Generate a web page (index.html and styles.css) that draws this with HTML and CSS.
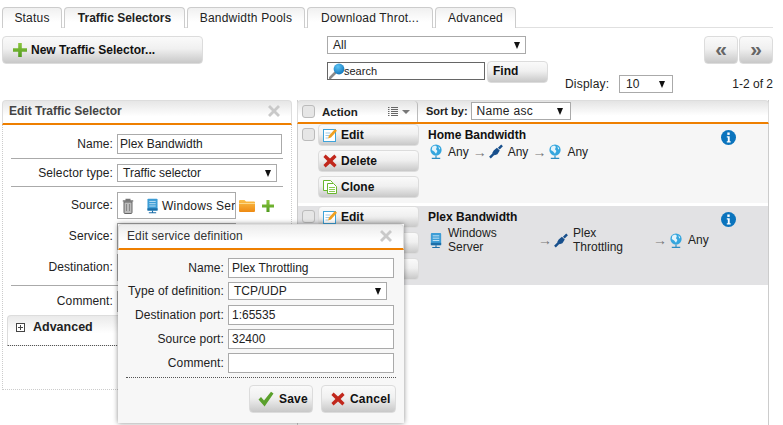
FILE: index.html
```html
<!DOCTYPE html>
<html lang="en">
<head>
<meta charset="utf-8">
<title>Traffic Selectors</title>
<link rel="stylesheet" href="styles.css">
</head>
<body>
<svg class="defs" width="0" height="0" aria-hidden="true">
  <defs>
    <linearGradient id="gGreen" x1="0" y1="0" x2="0" y2="1"><stop offset="0" stop-color="#8cc63f"/><stop offset="1" stop-color="#4f9a1e"/></linearGradient>
    <linearGradient id="gFolder" x1="0" y1="0" x2="0" y2="1"><stop offset="0" stop-color="#fbc04a"/><stop offset="1" stop-color="#ee8a12"/></linearGradient>
    <radialGradient id="gLens" cx=".4" cy=".3" r=".8"><stop offset="0" stop-color="#5cc4f5"/><stop offset="1" stop-color="#0a6db5"/></radialGradient>
    <symbol id="i-plus" viewBox="0 0 14 14"><path d="M5.2 0h3.6v5.2H14v3.6H8.8V14H5.2V8.8H0V5.2h5.2z" fill="url(#gGreen)"/></symbol>
    <symbol id="i-close" viewBox="0 0 12 12"><path d="M2 0l4 4 4-4 2 2-4 4 4 4-2 2-4-4-4 4-2-2 4-4-4-4z" fill="#c9c9c9"/></symbol>
    <symbol id="i-x" viewBox="0 0 14 14"><path d="M2.6.6L7 4.6 11.4.6 13.6 3 9.6 7l4 4-2.2 2.4L7 9.4l-4.4 4L.4 11l4-4-4-4z" fill="#c1271c"/></symbol>
    <symbol id="i-check" viewBox="0 0 16 16"><path d="M.5 8.5L3 6l3 3.6L13 .8l2.5 1.6L6.6 15.5z" fill="#5aa02c"/></symbol>
    <symbol id="i-lens" viewBox="0 0 16 16"><path d="M1 15l5-5" stroke="#8b8b8b" stroke-width="2.6" stroke-linecap="round"/><circle cx="10" cy="6" r="5.4" fill="url(#gLens)"/></symbol>
    <symbol id="i-trash" viewBox="0 0 12 16"><path d="M3.5 1.5h5M.8 3h10.4" stroke="#777" stroke-width="1.4" fill="none"/><path d="M2 4h8v10.5a1 1 0 0 1-1 1H3a1 1 0 0 1-1-1z" fill="#bbb" stroke="#666"/><path d="M4.5 6v7M7.5 6v7" stroke="#888"/></symbol>
    <symbol id="i-server" viewBox="1 0 12 16"><rect x="1.5" y="0" width="11" height="13" rx="1" fill="#3d9dd6"/><path d="M3.5 3h7M3.5 5.5h7M3.5 8h7" stroke="#c9e6f6" stroke-width="1"/><rect x="1.5" y="10.5" width="11" height="2.5" fill="#1c6ea8"/><path d="M7 13v2M3 15.4h8" stroke="#1c6ea8" stroke-width="1.2"/></symbol>
    <symbol id="i-globe" viewBox="0 0 14 16"><circle cx="7" cy="6.5" r="6" fill="#35a6de"/><path d="M3 3l3-1.5 2 1.5-1 2.5 1.5 2-1.5 3L5 8 2.5 6.5zM9.5 2.5l2 2-1 1.5z" fill="#e4f4fb"/><path d="M7 12.5V15M2.500 15.3h9" stroke="#2a8cc2" stroke-width="1.2"/></symbol>
    <symbol id="i-link" viewBox="0 0 15 15"><path d="M5 6.5L8.5 3.5 11.5 6.5 9 10.5 6 11.5 3.5 9z" fill="#174f8c"/><path d="M1 14l4-4M10.5 4.5L14 1" stroke="#174f8c" stroke-width="2.6"/></symbol>
    <symbol id="i-info" viewBox="0 0 15 15"><circle cx="7.5" cy="7.5" r="7.5" fill="#0b74bd"/><rect x="6.3" y="2.5" width="2.4" height="2.4" fill="#fff"/><path d="M5.8 6.3h2.9v5h1v1.1H5.8v-1.1h1V7.4h-1z" fill="#fff"/></symbol>
    <symbol id="i-edit" viewBox="0 0 14 14"><rect x=".5" y="1.5" width="12" height="12" fill="#fff" stroke="#3fa3d9"/><path d="M2.5 5h5M2.5 7.5H6M2.5 10H5" stroke="#9cc9e6"/><path d="M5 10.500l1-3L12 1l2 1.800L8 9.500z" fill="#f0a020"/></symbol>
    <symbol id="i-clone" viewBox="0 0 14 14"><path d="M.5.500h7l2 2v8h-9z" fill="#fff" stroke="#6ab72f"/><path d="M4.500 3.500h6l3 3v7h-9z" fill="#fff" stroke="#6ab72f"/><path d="M6 7.500h6M6 9.500h6M6 11.500h6" stroke="#8ccb55"/></symbol>
    <symbol id="i-folder" viewBox="0 0 16 13"><path d="M0 2a1 1 0 0 1 1-1h4.500l1.500 1.500h8a1 1 0 0 1 1 1V12a1 1 0 0 1-1 1H1a1 1 0 0 1-1-1z" fill="url(#gFolder)"/><path d="M0 4.500h16" stroke="#fcd98a"/></symbol>
    <symbol id="i-list" viewBox="0 0 10 9"><path d="M0 .500h1.500M3 .500h7M0 2.500h1.500M3 2.500h7M0 4.500h1.500M3 4.500h7M0 6.500h1.500M3 6.500h7M0 8.500h1.500M3 8.500h7" stroke="#666"/></symbol>
  </defs>
</svg>

<nav class="tabs">
  <a class="tab tab-status">Status</a>
  <a class="tab tab-traffic active">Traffic Selectors</a>
  <a class="tab tab-pools">Bandwidth Pools</a>
  <a class="tab tab-download">Download Throt...</a>
  <a class="tab tab-advanced">Advanced</a>
</nav>

<section class="toolbar">
  <button class="btn btn-new"><svg class="ico14"><use href="#i-plus"/></svg>New Traffic Selector...</button>
  <div class="filters">
    <div class="select select-all"><span>All</span><i class="caret"></i></div>
    <div class="search-row">
      <div class="search"><svg class="ico-lens"><use href="#i-lens"/></svg><span>search</span></div>
      <button class="btn btn-find">Find</button>
    </div>
  </div>
  <div class="pager">
    <div class="pager-arrows">
      <button class="btn btn-arrow">«</button>
      <button class="btn btn-arrow">»</button>
    </div>
    <div class="pager-info">
      <span class="display-label">Display:</span>
      <div class="select select-display"><span>10</span><i class="caret"></i></div>
      <span class="count">1-2 of 2</span>
    </div>
  </div>
</section>

<main class="panels">
  <section class="panel-edit">
    <header class="panel-head">
      <h2>Edit Traffic Selector</h2>
      <svg class="ico-close"><use href="#i-close"/></svg>
    </header>
    <div class="edit-body">
      <div class="frow lined">
        <label>Name:</label>
        <input class="field field-name" value="Plex Bandwidth">
      </div>
      <div class="frow lined">
        <label>Selector type:</label>
        <div class="select select-type"><span>Traffic selector</span><i class="caret"></i></div>
      </div>
      <div class="frow">
        <label class="label-up">Source:</label>
        <div class="picker">
          <svg class="ico-trash"><use href="#i-trash"/></svg>
          <svg class="ico-server"><use href="#i-server"/></svg>
          <span class="picker-text">Windows Server</span>
        </div>
        <svg class="ico-folder"><use href="#i-folder"/></svg>
        <svg class="ico-add"><use href="#i-plus"/></svg>
      </div>
      <div class="frow">
        <label class="label-up">Service:</label>
        <div class="picker"></div>
      </div>
      <div class="frow lined">
        <label class="label-up">Destination:</label>
        <div class="picker"></div>
      </div>
      <div class="frow comment">
        <label class="label-up">Comment:</label>
        <input class="field field-name">
      </div>
      <div class="adv">
        <span class="adv-box"></span>
        <strong>Advanced</strong>
      </div>
    </div>
  </section>

  <section class="panel-list">
    <header class="list-head">
      <div class="col-action">
        <span class="check"></span>
        <strong>Action</strong>
        <svg class="ico-list"><use href="#i-list"/></svg>
        <i class="caret caret-grey"></i>
      </div>
      <div class="col-sort">
        <strong>Sort by:</strong>
        <div class="select select-sort"><span>Name asc</span><i class="caret"></i></div>
      </div>
    </header>

    <article class="row row-light">
      <div class="col-action">
        <span class="check"></span>
        <div class="actions">
          <button class="btn btn-act"><svg class="ico14"><use href="#i-edit"/></svg>Edit</button>
          <button class="btn btn-act"><svg class="ico14"><use href="#i-x"/></svg>Delete</button>
          <button class="btn btn-act"><svg class="ico14"><use href="#i-clone"/></svg>Clone</button>
        </div>
      </div>
      <div class="row-main">
        <div class="row-text">
          <h3>Home Bandwidth</h3>
          <div class="route">
            <svg class="ico-node"><use href="#i-globe"/></svg><span class="node">Any</span><span class="arrow">→</span>
            <svg class="ico-node"><use href="#i-link"/></svg><span class="node">Any</span><span class="arrow">→</span>
            <svg class="ico-node"><use href="#i-globe"/></svg><span class="node">Any</span>
          </div>
        </div>
        <svg class="ico-info"><use href="#i-info"/></svg>
      </div>
    </article>

    <article class="row row-dark">
      <div class="col-action">
        <span class="check"></span>
        <div class="actions">
          <button class="btn btn-act"><svg class="ico14"><use href="#i-edit"/></svg>Edit</button>
          <button class="btn btn-act"><svg class="ico14"><use href="#i-x"/></svg>Delete</button>
          <button class="btn btn-act"><svg class="ico14"><use href="#i-clone"/></svg>Clone</button>
        </div>
      </div>
      <div class="row-main">
        <div class="row-text">
          <h3>Plex Bandwidth</h3>
          <div class="route">
            <svg class="ico-node"><use href="#i-server"/></svg><span class="node node-server">Windows Server</span><span class="arrow">→</span>
            <svg class="ico-node"><use href="#i-link"/></svg><span class="node node-plex">Plex Throttling</span><span class="arrow">→</span>
            <svg class="ico-node"><use href="#i-globe"/></svg><span class="node">Any</span>
          </div>
        </div>
        <svg class="ico-info"><use href="#i-info"/></svg>
      </div>
    </article>
  </section>
</main>

<aside class="modal">
  <header class="modal-head">
    <h2>Edit service definition</h2>
    <svg class="ico-close"><use href="#i-close"/></svg>
  </header>
  <div class="modal-body">
    <div class="mrow"><label>Name:</label><input class="field" value="Plex Throttling"></div>
    <div class="mrow mrow-select"><label>Type of definition:</label><div class="select select-def"><span>TCP/UDP</span><i class="caret"></i></div></div>
    <div class="mrow"><label>Destination port:</label><input class="field" value="1:65535"></div>
    <div class="mrow"><label>Source port:</label><input class="field" value="32400"></div>
    <div class="mrow"><label>Comment:</label><input class="field"></div>
  </div>
  <footer class="modal-foot">
    <button class="btn btn-save"><svg class="ico-check"><use href="#i-check"/></svg>Save</button>
    <button class="btn btn-cancel"><svg class="ico14"><use href="#i-x"/></svg>Cancel</button>
  </footer>
</aside>
</body>
</html>
```

FILE: styles.css
```css
* { box-sizing: border-box; }
html, body { height: 425px; overflow: hidden; }
body {
  margin: 0;
  position: relative;
  background: #fff;
  color: #222;
  font: 12px/14px "Liberation Sans", Arial, sans-serif;
}
h2, h3 { margin: 0; font-size: 12px; }
.defs { position: absolute; }
button { font-family: inherit; color: #111; cursor: default; }

/* tabs */
.tabs {
  display: flex;
  gap: 2px;
  width: 771px;
  height: 21px;
  margin: 7px 0 0 2px;
  border-bottom: 1px solid #e0e0e0;
}
.tab {
  height: 21px;
  padding-top: 3px;
  text-align: center;
  letter-spacing: .2px;
  background: linear-gradient(#f0f0f0, #fff 70%);
  border: 1px solid #ccc;
  border-bottom: 0;
  border-radius: 4px 4px 0 0;
}
.tab.active { font-weight: bold; letter-spacing: 0; background: linear-gradient(#eee, #fff 70%); }
.tab-status { width: 60px; }
.tab-traffic { width: 121px; }
.tab-pools { width: 118px; }
.tab-download { width: 126px; }
.tab-advanced { width: 81px; }

/* buttons */
.btn {
  display: flex;
  align-items: center;
  padding: 0;
  border: 1px solid #dcdcdc;
  border-radius: 4px;
  background: linear-gradient(#fafafa 0, #f0f0f0 45%, #c8c8c8 100%);
  font-size: 12px;
  font-weight: bold;
}

/* toolbar */
.toolbar { display: flex; height: 64px; margin: 8px 0 0 2px; }
.btn-new { width: 201px; height: 28px; padding-left: 10px; gap: 4px; }
.ico14 { width: 14px; height: 14px; flex: none; }
.filters { width: 221px; margin-left: 124px; }
.select {
  display: flex;
  align-items: center;
  justify-content: space-between;
  height: 18px;
  padding: 0 5px;
  background: #fff;
  border: 1px solid #aaa;
}
.caret {
  width: 0;
  height: 0;
  border: 3.5px solid transparent;
  border-top: 7px solid #111;
  border-bottom: 0;
}
.caret-grey { border-top: 4px solid #777; border-left-width: 4px; border-right-width: 4px; }
.select-all { width: 199px; }
.search-row { display: flex; align-items: flex-start; gap: 2px; margin-top: 7px; }
.search {
  display: flex;
  align-items: center;
  width: 158px;
  height: 18px;
  margin-top: 1px;
  border: 1px solid #666;
  font-size: 11px;
}
.ico-lens { width: 16px; height: 16px; margin-left: 1px; margin-right: -1px; flex: none; }
.btn-find { width: 61px; height: 22px; padding: 0 0 2px 5px; }
.pager { width: 208px; margin-left: auto; margin-right: 10px; }
.pager-arrows { display: flex; justify-content: flex-end; gap: 1px; }
.btn-arrow {
  width: 34px;
  height: 28px;
  justify-content: center;
  padding-bottom: 3px;
  font-size: 21px;
  font-weight: bold;
  color: #666;
}
.pager-info { display: flex; align-items: center; height: 18px; margin-top: 11px; }
.display-label { width: 54px; letter-spacing: .2px; }
.select-display { width: 54px; padding: 0 7px 0 6px; }
.count { margin-left: auto; }

/* panels */
.panels { display: flex; gap: 5px; margin-left: 2px; }
.panel-edit { width: 290px; height: 290px; }
.panel-head, .modal-head {
  display: flex;
  align-items: center;
  justify-content: space-between;
  border: 1px solid #ddd;
  border-bottom: 2px solid #ee7f00;
  border-radius: 4px 4px 0 0;
  background: linear-gradient(#e6e6e6, #fff 70%);
}
.panel-head { height: 25px; padding: 0 11px 2px 6px; }
.panel-head h2 { color: #444; }
.ico-close { width: 12px; height: 12px; }
.edit-body {
  height: 265px;
  padding-top: 9px;
  border: 1px dotted #ccc;
  border-top: 0;
}
.frow { display: flex; align-items: center; margin-bottom: 4px; }
.frow label { width: 110px; margin-right: 4px; text-align: right; letter-spacing: .1px; }
.frow .label-up { padding-bottom: 2px; }
.frow.lined { position: relative; padding-bottom: 4px; margin-bottom: 6px; }
.frow.lined::after {
  content: "";
  position: absolute;
  left: 8px;
  right: 8px;
  bottom: -1px;
  border-bottom: 1px solid #aaa;
}
.field {
  width: 166px;
  height: 20px;
  padding: 0 3px;
  border: 1px solid #aaa;
  background: #fff;
  color: #222;
  font: 12px "Liberation Sans", Arial, sans-serif;
}
.field-name { width: 165px; padding-left: 2px; }
.select-type { width: 160px; }
.picker {
  display: flex;
  align-items: center;
  width: 119px;
  height: 27px;
  padding-left: 4px;
  border: 1px solid #aaa;
  background: #fff;
  overflow: hidden;
  white-space: nowrap;
}
.picker-text { letter-spacing: .25px; }
.ico-trash { width: 12px; height: 16px; flex: none; }
.ico-server { width: 11px; height: 16px; margin: 0 4px 0 13px; flex: none; }
.ico-folder { width: 16px; height: 13px; margin-left: 3px; flex: none; }
.ico-add { width: 12px; height: 12px; margin-left: 7px; flex: none; }
.comment { margin-bottom: 3px; }
.comment .field { height: 21px; }
.adv {
  display: flex;
  align-items: center;
  gap: 8px;
  height: 31px;
  margin: 0 4px;
  padding: 0 0 7px 8px;
  border: 1px solid #ddd;
  border-bottom: 1px dotted #555;
  border-right: 0;
  border-radius: 4px 0 0 0;
  background: linear-gradient(#eaeaea, #fff 60%);
}
.adv strong { font-size: 12.5px; color: #222; }
.adv-box {
  position: relative;
  width: 9px;
  height: 9px;
  border: 1px solid #444;
  background: linear-gradient(#444, #444) center / 5px 1px no-repeat, linear-gradient(#444, #444) center / 1px 5px no-repeat, #fff;
}

/* list */
.panel-list {
  width: 472px;
  height: 325px;
  border-left: 1px solid #ccc;
  border-right: 1px solid #ccc;
}
.list-head {
  display: flex;
  height: 24px;
  margin-left: -1px;
  margin-right: -1px;
  padding: 1px 0 2px;
  border: 1px solid #ddd;
  border-bottom: 2px solid #ee7f00;
  border-radius: 4px 4px 0 0;
  background: linear-gradient(#e4e4e4, #fff 70%);
}
.list-head .col-action {
  position: relative;
  align-items: center;
  width: 120px;
  height: 21px;
  margin-top: -1px;
  padding-left: 4px;
  border-right: 1px solid #bbb;
  border-radius: 0 4px 0 0;
}
.col-action { display: flex; }
.list-head strong { font-size: 11.5px; color: #222; }
.check {
  flex: none;
  width: 13px;
  height: 13px;
  border: 1px solid #bbb;
  border-radius: 3px;
  background: #e6e6e6;
}
.list-head .check { margin-right: 7px; }
.ico-list { width: 10px; height: 9px; margin-left: 30px; margin-right: 4px; }
.col-sort { display: flex; align-items: center; gap: 3px; padding-left: 8px; }
.col-sort strong { font-size: 11px; }
.select-sort { width: 100px; height: 18px; padding-right: 7px; letter-spacing: .3px; }

.row { display: flex; }
.row-light { height: 79px; margin-bottom: 3px; background: #f6f6f6; }
.row-dark { height: 79px; background: #e2e2e4; }
.row .col-action { width: 121px; padding-left: 4px; }
.row .check { margin-top: 4px; }
.actions { display: flex; flex-direction: column; gap: 4px; margin-left: 3px; }
.btn-act { width: 101px; height: 22px; padding-left: 4px; gap: 4px; }
.row-main { display: flex; padding: 4px 0 0 9px; }
.row-text { width: 293px; }
.row-text h3 { line-height: 14px; color: #111; }
.route { display: flex; align-items: center; margin-top: 2px; padding-left: 1px; }
.ico-node { width: 14px; height: 15px; flex: none; margin-right: 5px; }
.node-server { width: 86px; }
.node-plex { width: 76px; }
.arrow { width: 11px; margin: 0 5px 0 4px; color: #777; font-size: 14px; line-height: 14px; }
.ico-info { width: 15px; height: 15px; margin-top: 2px; }

/* modal */
.modal {
  position: absolute;
  left: 118px;
  top: 224px;
  width: 286px;
  height: 199px;
  background: #f7f7f7;
  box-shadow: 0 0 5px rgba(0, 0, 0, .45);
}
.modal-head { height: 26px; padding: 0 11px 2px 8px; background: linear-gradient(#ececec, #fff 70%); }
.modal-head h2 { font-weight: normal; color: #333; letter-spacing: .1px; }
.modal-body { padding: 8px 10px 0 0; }
.mrow { display: flex; align-items: center; margin-bottom: 4px; }
.mrow label { width: 106px; margin-right: 4px; text-align: right; letter-spacing: .1px; }
.mrow-select { margin-bottom: 5px; }
.mrow .field { width: 166px; height: 20px; }
.select-def { width: 159px; height: 18px; }
.modal-foot {
  display: flex;
  justify-content: flex-end;
  gap: 8px;
  margin: 3px 8px 0;
  padding-top: 7px;
  border-top: 1px dotted #555;
}
.btn-save, .btn-cancel { height: 28px; letter-spacing: .2px; }
.btn-save { width: 64px; padding-left: 8px; gap: 5px; }
.btn-cancel { width: 75px; padding-left: 9px; gap: 5px; }
.ico-check { width: 16px; height: 16px; flex: none; }
```
